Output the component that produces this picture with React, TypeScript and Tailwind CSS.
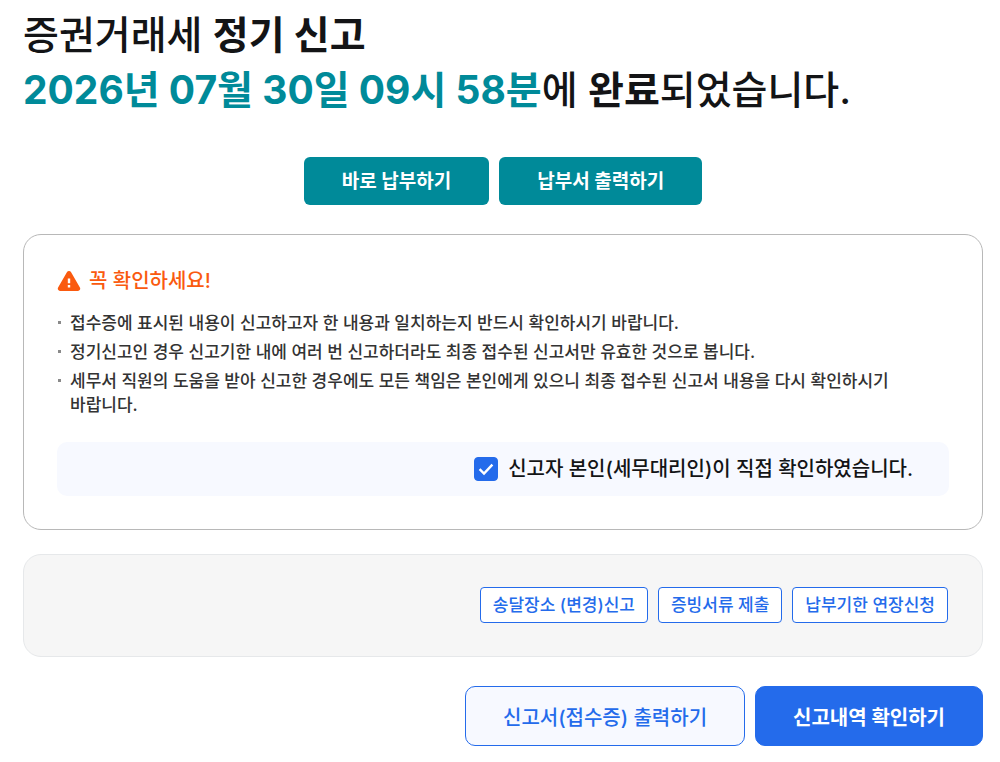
const notices = [
  '접수증에 표시된 내용이 신고하고자 한 내용과 일치하는지 반드시 확인하시기 바랍니다.',
  '정기신고인 경우 신고기한 내에 여러 번 신고하더라도 최종 접수된 신고서만 유효한 것으로 봅니다.',
  '세무서 직원의 도움을 받아 신고한 경우에도 모든 책임은 본인에게 있으니 최종 접수된 신고서 내용을 다시 확인하시기 바랍니다.',
];

const paymentActions = ['바로 납부하기', '납부서 출력하기'];
const relatedActions = ['송달장소 (변경)신고', '증빙서류 제출', '납부기한 연장신청'];

function WarningIcon() {
  return (
    <svg viewBox="0 0 24 22" className="h-[22px] w-6 shrink-0" aria-hidden="true">
      <path
        d="M9.9 2.2a2.4 2.4 0 0 1 4.2 0l8.8 15.4a2.2 2.2 0 0 1-1.9 3.3H3a2.2 2.2 0 0 1-1.9-3.3z"
        fill="#fa5a0f"
      />
      <path d="M12 8.4v4.8M12 15v2.4" stroke="#fff" strokeWidth="2.4" />
    </svg>
  );
}

function ConfirmCheckbox() {
  return (
    <label className="flex items-center gap-[10px] text-[20px] leading-6 font-medium text-[#131416]">
      <span className="grid size-6 shrink-0">
        <input
          type="checkbox"
          defaultChecked
          className="peer col-start-1 row-start-1 size-6 appearance-none rounded-[4px] border border-[#246beb] bg-white checked:bg-[#246beb]"
        />
        <svg
          viewBox="0 0 24 24"
          className="pointer-events-none invisible col-start-1 row-start-1 size-6 peer-checked:visible"
          fill="none"
          stroke="#fff"
          strokeWidth="2.4"
          aria-hidden="true"
        >
          <path d="M5.6 12.2l4.4 4.4L18.4 7.6" />
        </svg>
      </span>
      신고자 본인(세무대리인)이 직접 확인하였습니다.
    </label>
  );
}

export default function App() {
  return (
    <main className="bg-white pt-[7px] pr-[17px] pb-4 pl-[23px] font-['Inter','Noto_Sans_CJK_KR',sans-serif] break-keep">
      <h1 className="text-[39px] leading-[55px] font-medium text-[#131416]">
        증권거래세 <strong className="font-bold">정기 신고</strong>
        <br />
        <strong className="font-bold text-[#008a99]">2026년 07월 30일 09시 58분</strong>에{' '}
        <strong className="font-bold">완료</strong>되었습니다.
      </h1>

      <div className="mt-10 flex justify-center gap-[10px]">
        {paymentActions.map((label) => (
          <button
            key={label}
            type="button"
            className="h-12 rounded-md bg-[#008a99] px-[38px] pt-0.5 text-[19px] leading-6 font-bold text-white"
          >
            {label}
          </button>
        ))}
      </div>

      <section className="mt-[29px] rounded-[18px] border border-[#b8b8b8] px-[33px] pt-[34px] pb-[33px]">
        <h2 className="flex items-center gap-2 text-[20px] leading-6 font-medium text-[#fa5a0f]">
          <WarningIcon />
          꼭 확인하세요!
        </h2>
        <ul className="mt-[18px] flex flex-col gap-[5px] text-[17px] leading-6 font-medium text-[#333]">
          {notices.map((notice) => (
            <li key={notice} className="flex gap-[9px] pr-8">
              <span className="mt-[10px] ml-px size-[3px] shrink-0 bg-[#8a8a8a]" />
              {notice}
            </li>
          ))}
        </ul>
        <div className="mt-[25px] flex justify-end rounded-[10px] bg-[#f7f9ff] px-9 py-[15px]">
          <ConfirmCheckbox />
        </div>
      </section>

      <section className="mt-6 flex justify-end gap-[10px] rounded-[18px] border border-[#e6e8ea] bg-[#f6f6f6] px-[34px] pt-8 pb-[33px]">
        {relatedActions.map((label) => (
          <button
            key={label}
            type="button"
            className="h-9 rounded-[4px] border border-[#246beb] bg-white px-3 text-[17px] leading-6 font-medium text-[#246beb]"
          >
            {label}
          </button>
        ))}
      </section>

      <div className="mt-[29px] flex justify-end gap-[10px] text-[20px] leading-6">
        <button
          type="button"
          className="h-[60px] rounded-[10px] border border-[#246beb] bg-[#f7f9ff] px-[37px] pt-[3px] font-medium text-[#246beb]"
        >
          신고서(접수증) 출력하기
        </button>
        <button
          type="button"
          className="h-[60px] rounded-[10px] border border-[#246beb] bg-[#246beb] px-[37px] pt-[3px] font-bold text-white"
        >
          신고내역 확인하기
        </button>
      </div>
    </main>
  );
}
